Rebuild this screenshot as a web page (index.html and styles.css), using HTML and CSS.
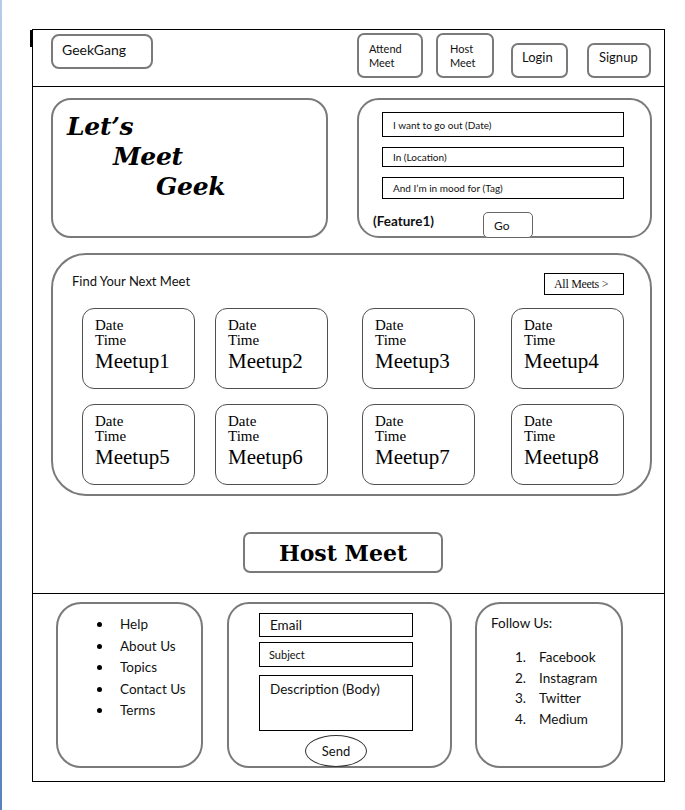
FILE: index.html
```html
<!DOCTYPE html>
<html lang="en">
<head>
<meta charset="utf-8">
<title>GeekGang</title>
<link rel="stylesheet" href="styles.css">
</head>
<body>
<div class="frame">
  <header class="topbar">
    <div class="brand">GeekGang</div>
    <nav class="nav">
      <a class="nav-btn tall n-attend">Attend<br>Meet</a>
      <a class="nav-btn tall n-host">Host<br>Meet</a>
      <a class="nav-btn short n-login">Login</a>
      <a class="nav-btn short n-signup">Signup</a>
    </nav>
  </header>

  <main class="main">
    <section class="hero">
      <div class="hero-title">
        <div class="l1">Let’s</div>
        <div class="l2">Meet</div>
        <div class="l3">Geek</div>
      </div>
      <div class="search">
        <div class="field f1">I want to go out (Date)</div>
        <div class="field f2">In (Location)</div>
        <div class="field f3">And I’m in mood for (Tag)</div>
        <div class="search-foot">
          <span class="feature">(Feature1)</span>
          <span class="go">Go</span>
        </div>
      </div>
    </section>

    <section class="meets">
      <div class="meets-head">
        <span class="meets-title">Find Your Next Meet</span>
        <span class="all">All Meets &gt;</span>
      </div>
      <div class="cards">
        <div class="card"><div class="d">Date</div><div class="d">Time</div><div class="m">Meetup1</div></div>
        <div class="card"><div class="d">Date</div><div class="d">Time</div><div class="m">Meetup2</div></div>
        <div class="card"><div class="d">Date</div><div class="d">Time</div><div class="m">Meetup3</div></div>
        <div class="card"><div class="d">Date</div><div class="d">Time</div><div class="m">Meetup4</div></div>
        <div class="card"><div class="d">Date</div><div class="d">Time</div><div class="m">Meetup5</div></div>
        <div class="card"><div class="d">Date</div><div class="d">Time</div><div class="m">Meetup6</div></div>
        <div class="card"><div class="d">Date</div><div class="d">Time</div><div class="m">Meetup7</div></div>
        <div class="card"><div class="d">Date</div><div class="d">Time</div><div class="m">Meetup8</div></div>
      </div>
    </section>

    <div class="host-row"><div class="host-btn">Host Meet</div></div>
  </main>

  <footer class="footer">
    <div class="fbox links">
      <ul class="bullets">
        <li>Help</li>
        <li>About Us</li>
        <li>Topics</li>
        <li>Contact Us</li>
        <li>Terms</li>
      </ul>
    </div>
    <div class="fbox contact">
      <div class="in email">Email</div>
      <div class="in subject">Subject</div>
      <div class="in desc">Description (Body)</div>
      <div class="send">Send</div>
    </div>
    <div class="fbox follow">
      <div class="follow-title">Follow Us:</div>
      <ol class="nums">
        <li><span class="n">1.</span>Facebook</li>
        <li><span class="n">2.</span>Instagram</li>
        <li><span class="n">3.</span>Twitter</li>
        <li><span class="n">4.</span>Medium</li>
      </ol>
    </div>
  </footer>
</div>
</body>
</html>
```

FILE: styles.css
```css
* { box-sizing: border-box; margin: 0; padding: 0; }

html, body { height: 100%; }

body {
  background: #fff linear-gradient(#b6cce9, #5a81bd) 0 0 / 2px 100% no-repeat;
  font-family: Lato, "Open Sans", sans-serif;
  color: #111;
}

.frame {
  position: relative;
  margin: 29px 0 0 32px;
  width: 633px;
  height: 753px;
  border: 1px solid #000;
  display: flex;
  flex-direction: column;
}

.frame::before {
  content: "";
  position: absolute;
  left: -3px;
  top: 0;
  width: 3px;
  height: 17px;
  background: #000;
}

/* ---------- header ---------- */
.topbar {
  height: 57px;
  border-bottom: 1px solid #000;
  display: flex;
  padding-left: 18px;
}

.brand {
  margin-top: 4px;
  width: 102px;
  height: 35px;
  border: 2px solid #7a7a7a;
  border-radius: 8px;
  padding: 5px 0 0 9px;
  font-size: 14px;
  line-height: 17px;
}

.nav {
  margin-left: auto;
  padding: 0 13px 8px 0;
  display: flex;
  align-items: flex-end;
}

.nav-btn {
  display: block;
  border: 2px solid #7a7a7a;
  border-radius: 7px;
  color: #111;
}

.tall {
  height: 45px;
  font-size: 11px;
  line-height: 14px;
  padding-top: 7px;
}

.short {
  height: 35px;
  font-size: 13px;
  line-height: 17px;
  padding-top: 4px;
}

.n-attend { width: 66px; padding-left: 10px; }
.n-host { width: 58px; padding-left: 12px; margin-left: 13px; }
.n-login { width: 57px; padding-left: 9px; margin-left: 17px; }
.n-signup { width: 64px; padding-left: 10px; margin-left: 19px; }

/* ---------- main ---------- */
.main {
  height: 507px;
  border-bottom: 1px solid #000;
  padding: 11px 0 0 18px;
}

.hero {
  display: flex;
  gap: 29px;
}

.hero-title {
  width: 277px;
  height: 140px;
  border: 2px solid #7a7a7a;
  border-radius: 20px;
  padding: 12px 0 0 14px;
  font-family: "DejaVu Serif", serif;
  font-style: italic;
  font-weight: bold;
  font-size: 25px;
  line-height: 30px;
  letter-spacing: -0.3px;
  color: #000;
}

.l2 { margin-left: 46px; }
.l3 { margin-left: 89px; }

.search {
  width: 295px;
  height: 140px;
  border: 2px solid #7a7a7a;
  border-radius: 22px;
  padding-top: 12px;
}

.field {
  margin-left: 23px;
  width: 242px;
  border: 1px solid #000;
  padding-left: 10px;
  font-size: 10px;
  display: flex;
  align-items: center;
}

.f1 { height: 25px; }
.f2 { height: 20px; margin-top: 10px; }
.f3 { height: 22px; margin-top: 10px; }

.search-foot {
  display: flex;
  align-items: flex-start;
  margin-top: 13px;
  padding-left: 14px;
}

.feature {
  width: 110px;
  margin-top: 1px;
  font-weight: bold;
  font-size: 13.5px;
  line-height: 16px;
}

.go {
  width: 50px;
  height: 26px;
  border: 1.5px solid #666;
  border-radius: 5px;
  padding: 5px 0 0 10px;
  font-size: 12px;
  line-height: 15px;
  background: #fff;
}

/* ---------- meets ---------- */
.meets {
  margin-top: 15px;
  width: 601px;
  height: 243px;
  border: 2px solid #7a7a7a;
  border-radius: 35px;
}

.meets-head {
  display: flex;
  align-items: flex-start;
  margin-top: 18px;
  padding: 0 26px 0 19px;
}

.meets-title {
  font-size: 13px;
  line-height: 16px;
}

.all {
  margin-left: auto;
  width: 80px;
  height: 22px;
  border: 1px solid #000;
  padding-left: 9px;
  font-family: "Liberation Serif", serif;
  font-size: 12px;
  line-height: 20px;
  letter-spacing: -0.3px;
}

.cards {
  margin-top: 13px;
  padding-left: 29px;
  display: grid;
  grid-template-columns: 133px 147px 149px 113px;
  row-gap: 15px;
}

.card {
  width: 113px;
  height: 81px;
  border: 1.5px solid #505050;
  border-radius: 12px;
  padding: 9px 0 0 12px;
  font-family: "Liberation Serif", serif;
  color: #000;
}

.card .d {
  font-size: 15px;
  line-height: 15px;
}

.card .m {
  margin-top: 1px;
  font-size: 21px;
  line-height: 24px;
}

/* ---------- host ---------- */
.host-row {
  margin-top: 36px;
  padding-left: 192px;
}

.host-btn {
  width: 200px;
  height: 41px;
  border: 2px solid #7a7a7a;
  border-radius: 7px;
  display: flex;
  align-items: center;
  justify-content: center;
  font-family: "DejaVu Serif", serif;
  font-weight: bold;
  font-size: 22px;
  color: #000;
}

/* ---------- footer ---------- */
.footer {
  flex: 1;
  display: flex;
  align-items: flex-start;
  padding: 8px 0 0 23px;
  font-size: 13.5px;
  background: linear-gradient(#8a8a8a, #8a8a8a) 0 -1px / 157px 1px no-repeat;
}

.fbox {
  height: 166px;
  border: 2px solid #7a7a7a;
  border-radius: 25px;
}

.links { width: 147px; padding-top: 10px; }
.contact { width: 225px; margin-left: 24px; border-radius: 22px; padding: 9px 0 0 30px; }
.follow { width: 148px; margin-left: 23px; padding: 11px 0 0 14px; }

.bullets { list-style: none; }

.bullets li {
  display: flex;
  align-items: center;
  padding-left: 39px;
  line-height: 21.5px;
}

.bullets li::before {
  content: "";
  width: 5px;
  height: 5px;
  border-radius: 50%;
  background: #000;
  margin-right: 18px;
}

.in {
  width: 154px;
  border: 1px solid #000;
  padding-left: 10px;
}

.email { height: 24px; line-height: 23px; }
.subject { height: 25px; margin-top: 5px; padding-left: 9px; font-size: 11px; line-height: 23px; }
.desc { height: 56px; margin-top: 8px; padding-top: 5px; line-height: 17px; }

.send {
  margin: 4px 0 0 46px;
  width: 62px;
  height: 32px;
  border: 1px solid #333;
  border-radius: 50%;
  display: flex;
  align-items: center;
  justify-content: center;
  font-size: 13px;
}

.follow-title { line-height: 16px; }

.nums {
  list-style: none;
  margin: 16px 0 0 24px;
}

.nums li {
  line-height: 20.7px;
}

.nums .n {
  display: inline-block;
  width: 24px;
}
```
